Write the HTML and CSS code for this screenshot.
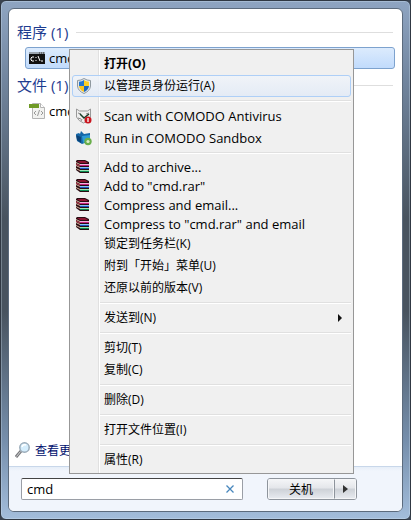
FILE: index.html
```html
<!DOCTYPE html>
<html lang="zh-CN">
<head>
    <meta charset="UTF-8">
    <meta name="viewport" content="width=device-width, initial-scale=1.0">
    <title>开始菜单</title>
    <link rel="stylesheet" href="styles.css">
</head>
<body>
    <!-- Shared icon -->
    <svg class="symbols" aria-hidden="true">
        <symbol id="rar" viewBox="0 0 14 14">
            <path d="M0 1l1-1h8l4 2v11H4l-4-3z" fill="#2a0d14"/>
            <path d="M1 1h8l3 2H4z" fill="#8c1430"/>
            <path d="M4 4h9v1H4z" fill="#f4b4dc"/>
            <path d="M4 5h9v1H4z" fill="#c4227e"/>
            <path d="M4 7h9v1H4z" fill="#8cc4f4"/>
            <path d="M4 8h9v1H4z" fill="#1c56c0"/>
            <path d="M4 10h9v1H4z" fill="#9ce8b8"/>
            <path d="M4 11h9v1H4z" fill="#0a8a50"/>
            <path d="M0 2.500l4 2M0 5.500l4 2M0 8.500l4 2" stroke="#d8b8a0"/>
            <path d="M0 4l4 2" stroke="#c43a55"/>
        </symbol>
    </svg>

    <main class="window">
        <div class="panel">
            <!-- Search results -->
            <section class="results">
                <h2>程序 (1)</h2>
                <a class="result selected" href="#">
                    <svg width="16" height="16" viewBox="0 0 16 16">
                        <path d="M0 2h16v12H0z" fill="#111"/>
                        <path d="M0 2h16v2H0z" fill="#9aa4ae"/>
                        <path d="M10 3h1m1 0h1m1 0h1" stroke="#333"/>
                        <path d="M5 7H3L2 8v2l1 1h2M7 7v1m0 2v1M9 6l2 5M12 11h2" fill="none" stroke="#fff"/>
                    </svg>
                    cmd
                </a>
                <h2>文件 (1)</h2>
                <a class="result" href="#">
                    <svg width="16" height="16" viewBox="0 0 16 16">
                        <path d="M3.500 .5h8l4 4v11h-12z" fill="#f2f2f0" stroke="#b4b4b4"/>
                        <path d="M11.500 .5v4h4" fill="#fff" stroke="#b4b4b4"/>
                        <path d="M0 1h10v4H0z" fill="#6f9a26"/>
                        <path d="M7 8l-2 2 2 2M12 8l2 2-2 2M10.500 7l-2 6" fill="none" stroke="#999"/>
                    </svg>
                    cmd
                </a>
            </section>
            <a class="more" href="#">
                <svg width="16" height="16" viewBox="0 0 16 16">
                    <path d="M6 9l-5 6" stroke="#77787c" stroke-width="3"/>
                    <path d="M5.500 9.500l-4 5" stroke="#d5d5d5"/>
                    <circle cx="9.500" cy="5.500" r="4.700" fill="#d4edfc" stroke="#9aabb9" stroke-width="1.500"/>
                    <path d="M7 5q1-3 4-2" fill="none" stroke="#fff" stroke-width="1.500"/>
                </svg>
                查看更多结果
            </a>

            <!-- Search box and power button -->
            <footer>
                <div class="search">
                    <input type="text" value="cmd" aria-label="搜索">
                    <button class="clear" aria-label="清除">
                        <svg width="8" height="8" viewBox="0 0 8 8"><path d="M.5.5l7 7m0-7l-7 7" stroke="#4887bd" stroke-width="1.300"/></svg>
                    </button>
                </div>
                <div class="power">
                    <button class="shutdown">关机</button>
                    <button class="options" aria-label="关机选项">
                        <svg width="5" height="8" viewBox="0 0 5 8"><path d="M0 0l5 4-5 4z" fill="#333"/></svg>
                    </button>
                </div>
            </footer>
        </div>
    </main>

    <!-- Context menu -->
    <div class="menu" role="menu">
        <button class="item default" role="menuitem">打开(O)</button>
        <button class="item hover" role="menuitem">
            <svg class="icon" width="16" height="16" viewBox="0 0 16 16">
                <path d="M8 .5Q11 2.500 14.500 2.500V8Q14 13 8 15.500 2 13 1.500 8V2.500Q5 2.500 8 .5z" fill="#e4e8ec" stroke="#8e989f"/>
                <path d="M8 2Q6 3.500 3 3.700V8h5z" fill="#2376ce"/>
                <path d="M8 2q2 1.500 5 1.700V8H8z" fill="#fbce22"/>
                <path d="M3 8h5v6Q3.500 12 3 8z" fill="#fbc51c"/>
                <path d="M8 8h5q-.5 4-5 6z" fill="#1d67bd"/>
            </svg>
            以管理员身份运行(A)
        </button>
        <hr>
        <button class="item latin" role="menuitem">
            <svg class="icon" width="16" height="16" viewBox="0 0 16 16">
                <path d="M.5 1l3 2h8l3-2v8q-2 4-7 6-5-2-7-6z" fill="#efefef" stroke="#999"/>
                <path d="M2 5l3 1M10 6l3-1M2 10l3 1M5 13l1-2" stroke="#888"/>
                <path d="M4 6l4 4 5-4" fill="none" stroke="#173d27" stroke-width="1.500"/>
                <circle cx="12" cy="12" r="3.500" fill="#c9151e"/>
                <path d="M12 10v4" stroke="#fff" stroke-width="1.300"/>
            </svg>
            Scan with COMODO Antivirus
        </button>
        <button class="item latin" role="menuitem">
            <svg class="icon" width="16" height="16" viewBox="0 0 16 16">
                <path d="M0 4l3-1 1 1 1-3 2 2 1 1 6-1v8l-8 3-5-3z" fill="#1467a8"/>
                <path d="M0 5l5 2v6l-4-3z" fill="#0b4378"/>
                <path d="M6 6l8-1v5l-7 3z" fill="#2c9ad5"/>
                <circle cx="12" cy="11.500" r="3.700" fill="#69ae4b"/>
                <circle cx="12" cy="11.500" r="1.600" fill="#d8edc8"/>
            </svg>
            Run in COMODO Sandbox
        </button>
        <hr>
        <button class="item latin short" role="menuitem"><svg class="icon" width="14" height="14"><use href="#rar" width="14" height="14"/></svg>Add to archive...</button>
        <button class="item latin short" role="menuitem"><svg class="icon" width="14" height="14"><use href="#rar" width="14" height="14"/></svg>Add to "cmd.rar"</button>
        <button class="item latin short" role="menuitem"><svg class="icon" width="14" height="14"><use href="#rar" width="14" height="14"/></svg>Compress and email...</button>
        <button class="item latin short" role="menuitem"><svg class="icon" width="14" height="14"><use href="#rar" width="14" height="14"/></svg>Compress to "cmd.rar" and email</button>
        <button class="item" role="menuitem">锁定到任务栏(K)</button>
        <button class="item" role="menuitem">附到「开始」菜单(U)</button>
        <button class="item" role="menuitem">还原以前的版本(V)</button>
        <hr>
        <button class="item" role="menuitem">
            发送到(N)
            <svg class="arrow" width="4" height="8" viewBox="0 0 4 8"><path d="M0 0l4 4-4 4z" fill="#111"/></svg>
        </button>
        <hr>
        <button class="item" role="menuitem">剪切(T)</button>
        <button class="item" role="menuitem">复制(C)</button>
        <hr>
        <button class="item" role="menuitem">删除(D)</button>
        <hr>
        <button class="item" role="menuitem">打开文件位置(I)</button>
        <hr>
        <button class="item" role="menuitem">属性(R)</button>
    </div>
</body>
</html>
```
FILE: styles.css
```css
* {
    box-sizing: border-box;
}

body {
    margin: 0;
    background: #3a4350;
    font-family: "Open Sans", "Noto Sans CJK SC", sans-serif;
    font-size: 12px;
    color: #000;
}

button, input {
    font: inherit;
    color: inherit;
}

.symbols {
    position: absolute;
    width: 0;
    height: 0;
}

.window {
    display: flex;
    min-height: 100vh;
    padding: 7px;
    border: 1px solid #303843;
    border-radius: 6px;
    background: linear-gradient(#8fa5c2, #72869f 15%, #48535f 42%, #48535f 60%, #768fac 85%, #a3bddb);
    box-shadow: inset 0 0 0 1px rgba(220, 235, 250, 0.3);
}

.panel {
    flex: 1;
    display: flex;
    flex-direction: column;
    border: 1px solid #5c6b7d;
    border-radius: 6px;
    background: #fff;
    overflow: hidden;
}

.results {
    flex: 1;
    padding: 12px 7px 0 8px;
}

.results h2 {
    display: flex;
    align-items: center;
    gap: 8px;
    height: 22px;
    margin: 0 2px 4px 0;
    font-size: 15px;
    font-weight: normal;
    line-height: 20px;
    color: #1e3c90;
}

.results h2::after {
    content: "";
    flex: 1;
    height: 1px;
    background: #dedede;
}

.result {
    display: flex;
    align-items: center;
    gap: 4px;
    height: 22px;
    margin: 0 0 5px 8px;
    padding-left: 3px;
    border: 1px solid transparent;
    border-radius: 3px;
    font-size: 13px;
    color: #000;
    text-decoration: none;
}

.result.selected {
    border-color: #7da2ce;
    background: linear-gradient(#dcebfd, #c1dbfc);
}

.more {
    display: flex;
    align-items: center;
    gap: 4px;
    height: 32px;
    padding-left: 6px;
    color: #00106e;
    text-decoration: none;
}

footer {
    display: flex;
    align-items: center;
    gap: 24px;
    height: 45px;
    padding: 0 45px 0 12px;
    border-top: 1px solid #c8d7ea;
    background: linear-gradient(#e6eef8, #f1f5fc 4px);
}

.search {
    flex: 1;
    display: flex;
    align-items: center;
    height: 22px;
    border: 1px solid #9a9ea6;
    border-top-color: #444;
    border-radius: 2px;
    background: #fff;
}

.search input {
    flex: 1;
    min-width: 0;
    padding: 0 5px;
    border: 0;
    outline: 0;
    background: none;
    font-size: 13px;
}

.clear {
    display: flex;
    padding: 0 8px;
    border: 0;
    background: none;
}

.power {
    display: flex;
    width: 90px;
    height: 22px;
    border: 1px solid #8e949c;
    border-radius: 3px;
    overflow: hidden;
}

.power button {
    display: flex;
    align-items: center;
    justify-content: center;
    padding: 0;
    border: 1px solid #f5f6f8;
    background: linear-gradient(#f3f4f6, #e4e6ea 45%, #cdd1d7 50%, #e6e9ee);
}

.power .shutdown {
    flex: 1;
}

.power .options {
    width: 22px;
    border-left-color: #8e949c;
}

/* Context menu */
.menu {
    position: absolute;
    top: 49px;
    left: 69px;
    width: 285px;
    padding: 3px 2px 2px;
    border: 1px solid #979797;
    background: linear-gradient(90deg, #f0f0f0 28px, #e0e0e0 28px, #e0e0e0 29px, #fff 29px, #fff 30px, #f0f0f0 30px);
}

.item {
    display: flex;
    align-items: center;
    width: 100%;
    height: 22px;
    padding: 0 8px 0 31px;
    border: 1px solid transparent;
    border-radius: 3px;
    background: none;
    line-height: 16px;
    text-align: left;
    white-space: nowrap;
}

.item.default {
    font-weight: bold;
}

.item.hover {
    border-color: #aecff7;
    background: linear-gradient(rgba(240, 244, 250, 0.8), rgba(225, 234, 247, 0.8));
}

.item.latin {
    font-size: 13px;
}

.item.short {
    height: 19px;
}

.icon {
    flex: none;
    width: 16px;
    margin: 0 12px 0 -28px;
}

.arrow {
    margin-left: auto;
}

.menu hr {
    height: 2px;
    margin: 3px 0 3px 28px;
    border: 0;
    border-top: 1px solid #e0e0e0;
    background: #fff;
}
```
